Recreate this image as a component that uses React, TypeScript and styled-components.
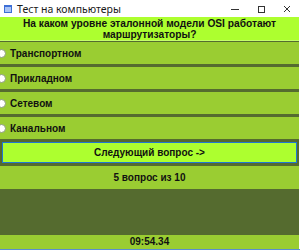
import styled, { createGlobalStyle } from 'styled-components'

const GlobalStyle = createGlobalStyle`
    html, body {
        margin: 0;
        padding: 0;
        width: 300px;
        height: 250px;
        overflow: hidden;
        background: #ffffff;
    }
`

const Window = styled.div`
    width: 300px;
    height: 250px;
    display: flex;
    flex-direction: column;
    background: #ffffff;
    box-sizing: border-box;
    border-bottom: 1px solid #5a8fd0;
`

const TitleBar = styled.div`
    height: 17px;
    flex: none;
    display: flex;
    align-items: center;
    background: #ffffff;
    font-family: 'Noto Sans', 'Liberation Sans', sans-serif;
    font-size: 10.5px;
    color: #1a1a1a;
`

const TitleText = styled.span`
    margin-left: 5px;
    flex: 1;
`

const Controls = styled.div`
    display: flex;
    align-items: center;
    height: 100%;
`

const ControlBox = styled.div`
    width: 26px;
    height: 100%;
    display: flex;
    align-items: center;
    justify-content: center;
`

const Client = styled.div`
    flex: 1;
    display: flex;
    flex-direction: column;
    background: #556b2f;
    margin-right: 1px;
    font-family: 'Liberation Sans', Arial, sans-serif;
    font-weight: bold;
    font-size: 10px;
    color: #111111;
`

const Question = styled.div`
    height: 24px;
    flex: none;
    display: flex;
    align-items: center;
    justify-content: center;
    text-align: center;
    line-height: 11px;
    font-size: 10.2px;
    background: #adff2f;
    border-bottom: 1px solid #c4ff6a;
    box-sizing: border-box;
    padding: 1px 6px 0;
    margin-bottom: 1px;
`

const Options = styled.div`
    display: flex;
    flex-direction: column;
    gap: 3px;
`

const Option = styled.label`
    height: 22px;
    display: flex;
    align-items: center;
    background: #9acd32;
    overflow: hidden;
`

const Radio = styled.span`
    width: 7px;
    height: 7px;
    border-radius: 50%;
    background: #ffffff;
    border: 1px solid #8a9a7a;
    margin-left: -3px;
    margin-right: 4px;
    flex: none;
`

const NextButton = styled.button`
    margin: 3px 2px 0 2px;
    height: 21px;
    flex: none;
    background: #adff2f;
    border: 1px solid #1e78d4;
    font: inherit;
    color: inherit;
    padding: 0;
`

const Counter = styled.div`
    margin-top: 3px;
    height: 23px;
    flex: none;
    display: flex;
    align-items: center;
    justify-content: center;
    background: #9acd32;
`

const Spacer = styled.div`
    flex: 1;
`

const Timer = styled.div`
    height: 14px;
    flex: none;
    display: flex;
    align-items: center;
    justify-content: center;
    background: #9acd32;
    line-height: 14px;
`

const answers = ['Транспортном', 'Прикладном', 'Сетевом', 'Канальном']

export default function App() {
    return (
        <>
            <GlobalStyle />
            <Window>
                <TitleBar>
                    <svg width='8' height='8' viewBox='0 0 8 8' style={{ marginLeft: 4 }}>
                        <rect x='0' y='0' width='8' height='8' fill='#3d6fd6' />
                        <rect x='1' y='2' width='6' height='5' fill='#a9c4f5' />
                    </svg>
                    <TitleText>Тест на компьютеры</TitleText>
                    <Controls>
                        <ControlBox>
                            <svg width='8' height='8' viewBox='0 0 8 8'>
                                <line x1='0' y1='4.5' x2='8' y2='4.5' stroke='#333' strokeWidth='1' />
                            </svg>
                        </ControlBox>
                        <ControlBox>
                            <svg width='8' height='8' viewBox='0 0 8 8'>
                                <rect x='1.5' y='1.5' width='6' height='6' fill='none' stroke='#333' strokeWidth='1' />
                            </svg>
                        </ControlBox>
                        <ControlBox>
                            <svg width='8' height='8' viewBox='0 0 8 8'>
                                <path d='M1 1 L7 7 M7 1 L1 7' stroke='#333' strokeWidth='1' />
                            </svg>
                        </ControlBox>
                    </Controls>
                </TitleBar>
                <Client>
                    <Question>На каком уровне эталонной модели OSI работают маршрутизаторы?</Question>
                    <Options>
                        {answers.map((a) => (
                            <Option key={a}>
                                <Radio />
                                {a}
                            </Option>
                        ))}
                    </Options>
                    <NextButton>Следующий вопрос -&gt;</NextButton>
                    <Counter>5 вопрос из 10</Counter>
                    <Spacer />
                    <Timer>09:54.34</Timer>
                </Client>
            </Window>
        </>
    )
}
